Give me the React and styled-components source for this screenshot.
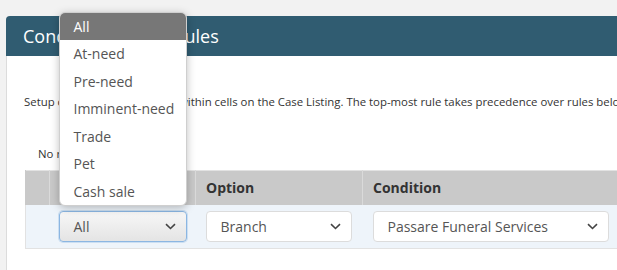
import React from "react";
import styled, { createGlobalStyle } from "styled-components";

const GlobalStyle = createGlobalStyle`
  html, body {
    margin: 0;
    padding: 0;
    background: #f2f2f2;
    font-family: "Open Sans", "Liberation Sans", Arial, sans-serif;
    overflow: hidden;
  }
`;

const Page = styled.div`
  width: 617px;
  height: 270px;
  padding: 16px 0 0 6px;
  box-sizing: border-box;
  overflow: hidden;
`;

const Panel = styled.section`
  width: 660px;
  background: #fff;
  border: 1px solid #dcdcdc;
  border-top: none;
  border-radius: 4px 4px 0 0;
  height: 260px;
`;

const PanelHeader = styled.header`
  height: 40px;
  display: flex;
  align-items: center;
  padding-left: 17px;
  background: #305c71;
  color: #fff;
  font-size: 18px;
  border-radius: 4px 4px 0 0;
  margin-left: -1px;
`;

const PanelBody = styled.div`
  padding: 38px 0 0 17px;
`;

const Description = styled.p`
  margin: 0;
  font-size: 11.4px;
  color: #333;
  white-space: nowrap;
`;

const EmptyText = styled.p`
  margin: 37px 0 0 14px;
  font-size: 11.4px;
  color: #333;
`;

const Table = styled.table`
  margin-top: 9px;
  margin-left: 1px;
  border-collapse: collapse;
  width: 640px;
  border: 1px solid #e2e2e2;
`;

const HeadCell = styled.th`
  background: #c9c9c9;
  height: 34px;
  padding: 0 10px;
  text-align: left;
  font-size: 14px;
  font-weight: 700;
  color: #333;
  border-left: 1px solid ${(p) => (p.$first ? "#c9c9c9" : "#dadada")};
  width: ${(p) => p.$w || "auto"};
  box-sizing: border-box;
`;

const Row = styled.tr`
  background: #eef4fa;
  border-bottom: 1px solid #e2e2e2;
`;

const Cell = styled.td`
  height: 44px;
  padding: 1px ${(p) => p.$pad || "10px"} 0;
  box-sizing: border-box;
`;

const SelectWrap = styled.div`
  position: relative;
  width: ${(p) => p.$w};
`;

const SelectBox = styled.div`
  height: 31px;
  box-sizing: border-box;
  display: flex;
  align-items: center;
  justify-content: space-between;
  padding: 0 10px 0 14px;
  border-radius: 4px;
  font-size: 14px;
  color: #555;
  border: 1px solid ${(p) => (p.$focus ? "#8bb6e2" : "#dcdcdc")};
  background: ${(p) =>
    p.$focus ? "linear-gradient(#f7f7f7, #e4e4e4)" : "#fff"};
  box-shadow: ${(p) => (p.$focus ? "0 0 0 1px rgba(139,182,226,0.35)" : "none")};
`;

const Menu = styled.ul`
  position: absolute;
  left: 0;
  bottom: calc(100% + 5px);
  width: 126px;
  margin: 0;
  padding: 0;
  list-style: none;
  background: #fff;
  border: 1px solid #cfcfcf;
  border-radius: 6px;
  overflow: hidden;
  box-shadow: 0 2px 8px rgba(0, 0, 0, 0.25);
  z-index: 10;
`;

const MenuItem = styled.li`
  height: 27.5px;
  line-height: 27.5px;
  padding-left: 14px;
  font-size: 14px;
  color: ${(p) => (p.$active ? "#fff" : "#555")};
  background: ${(p) => (p.$active ? "#777" : "transparent")};
`;

const Chevron = () => (
  <svg width="11" height="7" viewBox="0 0 11 7">
    <path d="M1 1.2 L5.5 5.5 L10 1.2" fill="none" stroke="#444" strokeWidth="1.6" />
  </svg>
);

const Select = ({ value, width, focus, children }) => (
  <SelectWrap $w={width}>
    <SelectBox $focus={focus}>
      <span>{value}</span>
      <Chevron />
    </SelectBox>
    {children}
  </SelectWrap>
);

const options = ["All", "At-need", "Pre-need", "Imminent-need", "Trade", "Pet", "Cash sale"];

export default function App() {
  return (
    <>
      <GlobalStyle />
      <Page>
        <Panel>
          <PanelHeader>Conditional Color Rules</PanelHeader>
          <PanelBody>
            <Description>
              Setup conditional formatting within cells on the Case Listing. The top-most rule takes
              precedence over rules below it.
            </Description>
            <EmptyText>No rules defined.</EmptyText>
            <Table>
              <thead>
                <tr>
                  <HeadCell $first $w="24px" />
                  <HeadCell $w="146px">Type</HeadCell>
                  <HeadCell $w="167px">Option</HeadCell>
                  <HeadCell>Condition</HeadCell>
                </tr>
              </thead>
              <tbody>
                <Row>
                  <Cell $pad="0" />
                  <Cell $pad="9px">
                    <Select value="All" width="128px" focus>
                      <Menu>
                        {options.map((o, i) => (
                          <MenuItem key={o} $active={i === 0}>
                            {o}
                          </MenuItem>
                        ))}
                      </Menu>
                    </Select>
                  </Cell>
                  <Cell>
                    <Select value="Branch" width="146px" />
                  </Cell>
                  <Cell>
                    <Select value="Passare Funeral Services" width="236px" />
                  </Cell>
                </Row>
              </tbody>
            </Table>
          </PanelBody>
        </Panel>
      </Page>
    </>
  );
}
